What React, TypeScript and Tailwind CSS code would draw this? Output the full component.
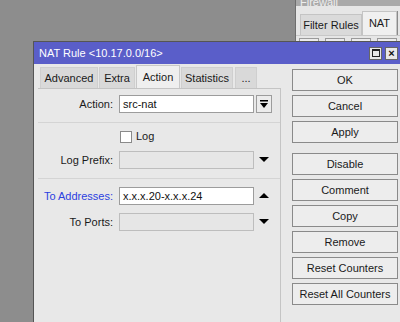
import React from "react";

function DownTri() {
  return (
    <svg width="10" height="6" viewBox="0 0 10 6">
      <polygon points="0,0 10,0 5,5" fill="#000" />
    </svg>
  );
}
function UpTri() {
  return (
    <svg width="10" height="6" viewBox="0 0 10 6">
      <polygon points="0,5 10,5 5,0" fill="#000" />
    </svg>
  );
}

function Btn({ label, className = "" }: { label: string; className?: string }) {
  return (
    <div
      className={
        "h-[22px] w-[106px] border border-[#8a8a8a] bg-[#ededed] flex items-center justify-center text-[11px] text-[#1a1a1a] " +
        className
      }
    >
      {label}
    </div>
  );
}

function Row({
  label,
  blue,
  white,
  value,
  icon,
  className = "",
}: {
  label: string;
  blue?: boolean;
  white?: boolean;
  value?: string;
  icon?: React.ReactNode;
  className?: string;
}) {
  return (
    <div className={"flex items-center h-[18px] " + className}>
      <div
        className={
          "w-[75px] text-right text-[11px] " + (blue ? "text-[#2b3fe0]" : "text-[#1a1a1a]")
        }
      >
        {label}
      </div>
      <div
        className={
          "ml-[6px] w-[135px] h-[18px] border flex items-center pl-[3px] text-[11px] text-[#111] " +
          (white ? "bg-white border-[#9c9c9c]" : "bg-[#e6e6e6] border-[#bdbdbd]")
        }
      >
        {value}
      </div>
      <div className="ml-[2px] w-[16px] h-[18px] flex items-center justify-center">{icon}</div>
    </div>
  );
}

export default function App() {
  return (
    <div className="relative w-[400px] h-[322px] overflow-hidden bg-[#8d8d8d] font-['Liberation_Sans',Arial,sans-serif]">
      {/* Firewall window behind */}
      <div className="absolute left-[295px] top-[-8px] w-[120px] h-[60px] bg-[#e6e6e6] border-l border-[#6e6e6e]">
        <div className="h-[14px] bg-[#a9a9a9] text-[11px] text-[#eeeeee] pl-[4px] leading-[20px]">
          Firewall
        </div>
        <div className="flex items-end h-[30px] pl-[4px] border-b border-[#c8c8c8]">
          <div className="h-[21px] w-[62px] bg-[#dadada] border border-[#c4c4c4] border-b-0 flex items-center justify-center text-[11px] text-[#1a1a1a]">
            Filter Rules
          </div>
          <div className="h-[24px] w-[35px] bg-[#f0f0f0] border border-[#c4c4c4] border-b-0 flex items-center justify-center text-[11px] text-[#1a1a1a]">
            NAT
          </div>
          <div className="h-[24px] w-[1px] bg-[#8a8a8a]" />
        </div>
        <div className="flex gap-[6px] pl-[3px] pt-[2px]">
          <div className="w-[20px] h-[10px] border border-[#9a9a9a] bg-[#ececec]" />
          <div className="w-[20px] h-[10px] border border-[#9a9a9a] bg-[#ececec]" />
          <div className="w-[20px] h-[10px] border border-[#9a9a9a] bg-[#ececec]" />
          <div className="w-[20px] h-[10px] border border-[#9a9a9a] bg-[#ececec]" />
        </div>
      </div>

      {/* NAT Rule window */}
      <div className="absolute left-[33px] top-[41px] w-[372px] h-[300px] bg-[#e8e8e8] border border-[#555]">
        <div className="h-[22px] bg-[#5a5ec9] flex items-center pl-[5px] text-[11px] text-white">
          <span>NAT Rule &lt;10.17.0.0/16&gt;</span>
          <div className="ml-auto mr-[6px] flex gap-[3px]">
            <div className="w-[13px] h-[13px] bg-[#e8e8e8] border border-[#666] flex items-center justify-center">
              <div className="w-[8px] h-[8px] border border-[#222] border-t-2" />
            </div>
            <div className="w-[13px] h-[13px] bg-[#e8e8e8] border border-[#666] flex items-center justify-center text-[11px] font-bold text-[#111] leading-none">
              ×
            </div>
          </div>
        </div>
        <div className="flex">
          {/* Left: tabs + panel */}
          <div className="ml-[4px] w-[243px]">
            <div className="flex items-end h-[24px] pl-[2px]">
              <div className="h-[21px] w-[58px] bg-[#d9d9d9] border border-[#cfcfcf] border-b-0 flex items-center justify-center text-[11px] text-[#1a1a1a]">
                Advanced
              </div>
              <div className="ml-[1px] h-[21px] w-[36px] bg-[#d9d9d9] border border-[#cfcfcf] border-b-0 flex items-center justify-center text-[11px] text-[#1a1a1a]">
                Extra
              </div>
              <div className="ml-[1px] h-[23px] w-[44px] bg-[#efefef] border border-[#c8c8c8] border-b-0 flex items-center justify-center text-[11px] text-[#1a1a1a]">
                Action
              </div>
              <div className="ml-[1px] h-[21px] w-[52px] bg-[#d9d9d9] border border-[#cfcfcf] border-b-0 flex items-center justify-center text-[11px] text-[#1a1a1a]">
                Statistics
              </div>
              <div className="ml-[2px] h-[21px] w-[22px] bg-[#d9d9d9] border border-[#cfcfcf] border-b-0 flex items-center justify-center text-[11px] text-[#1a1a1a]">
                ...
              </div>
            </div>
            <div className="h-[260px] border-t border-r border-[#c4c4c4] bg-[#e8e8e8]">
              <Row
                className="mt-[6px]"
                label="Action:"
                white
                value="src-nat"
                icon={
                  <div className="w-[16px] h-[18px] border border-[#9c9c9c] bg-[#ececec] flex items-center justify-center">
                    <svg width="8" height="9" viewBox="0 0 8 9">
                      <rect x="0" y="0" width="8" height="1.5" fill="#000" />
                      <polygon points="0,3 8,3 4,8" fill="#000" />
                    </svg>
                  </div>
                }
              />
              <div className="mt-[9px] h-px bg-[#d4d4d4]" />
              <div className="mt-[7px] flex items-center h-[13px] pl-[82px]">
                <div className="w-[12px] h-[12px] bg-white border border-[#8a8a8a]" />
                <span className="ml-[4px] text-[11px] text-[#1a1a1a]">Log</span>
              </div>
              <Row className="mt-[8px]" label="Log Prefix:" icon={<DownTri />} />
              <div className="mt-[9px] h-px bg-[#d4d4d4]" />
              <Row className="mt-[8px]" label="To Addresses:" blue white value="x.x.x.20-x.x.x.24" icon={<UpTri />} />
              <Row className="mt-[8px]" label="To Ports:" icon={<DownTri />} />
            </div>
          </div>
          {/* Right buttons */}
          <div className="ml-[11px] pt-[5px] flex flex-col gap-[4px]">
            <Btn label="OK" />
            <Btn label="Cancel" />
            <Btn label="Apply" />
            <Btn label="Disable" className="mt-[6px]" />
            <Btn label="Comment" />
            <Btn label="Copy" />
            <Btn label="Remove" />
            <Btn label="Reset Counters" />
            <Btn label="Reset All Counters" />
          </div>
        </div>
      </div>
    </div>
  );
}
